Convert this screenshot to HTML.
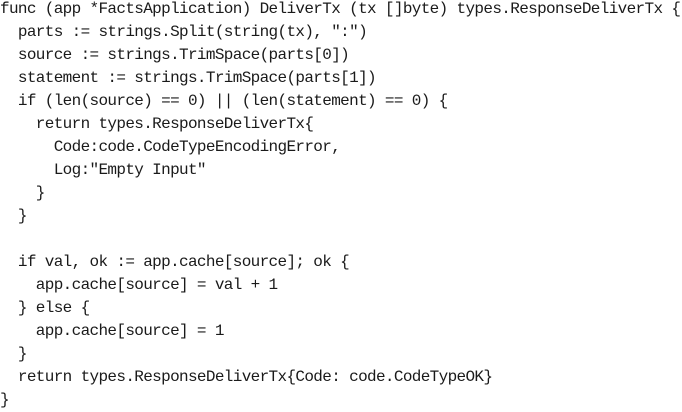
<!DOCTYPE html>
<html><head><meta charset="utf-8"><style>
html,body{margin:0;padding:0;background:#fff;width:682px;height:407px;overflow:hidden}
pre{position:absolute;left:0;top:-2px;margin:0;font-family:"Liberation Mono",monospace;font-size:16px;letter-spacing:-0.65px;line-height:23px;color:#1a1a1a}
</style></head><body>
<pre>func (app *FactsApplication) DeliverTx (tx []byte) types.ResponseDeliverTx {
  parts := strings.Split(string(tx), ":")
  source := strings.TrimSpace(parts[0])
  statement := strings.TrimSpace(parts[1])
  if (len(source) == 0) || (len(statement) == 0) {
    return types.ResponseDeliverTx{
      Code:code.CodeTypeEncodingError,
      Log:"Empty Input"
    }
  }

  if val, ok := app.cache[source]; ok {
    app.cache[source] = val + 1
  } else {
    app.cache[source] = 1
  }
  return types.ResponseDeliverTx{Code: code.CodeTypeOK}
}</pre>
</body></html>
